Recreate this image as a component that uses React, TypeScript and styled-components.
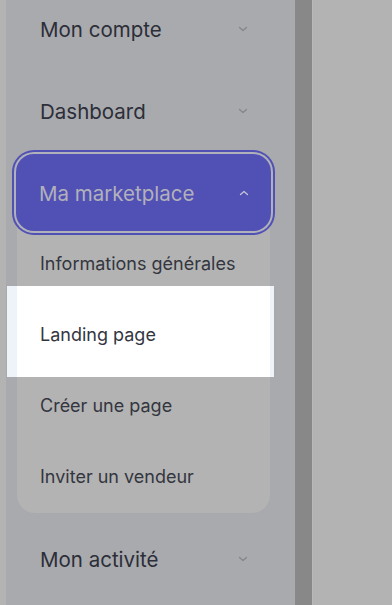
import React from 'react';
import styled, { createGlobalStyle } from 'styled-components';

const colors = {
  page: '#b3b3b3',
  sidebar: '#a9aaae',
  sidebarLit: '#eef2f9',
  card: '#b3b3b3',
  scrollbar: '#888888',
  purple: '#5150b4',
  ring: '#b1b1bb',
  text: '#2c2e38',
  subText: '#34363f',
  chevron: '#85868b',
  white: '#ffffff',
};

const GlobalStyle = createGlobalStyle`
  html, body {
    margin: 0;
    padding: 0;
    height: 100%;
    overflow: hidden;
    background: ${colors.page};
    font-family: Inter, "Noto Sans", sans-serif;
  }
  #root {
    height: 100%;
  }
`;

const Layout = styled.div({
  display: 'flex',
  height: '605px',
  overflow: 'hidden',
});

const Gutter = styled.div({
  width: '6px',
  flexShrink: 0,
});

const Sidebar = styled.nav({
  width: '289px',
  flexShrink: 0,
  backgroundColor: colors.sidebar,
  padding: '0 25px 0 11px',
  boxSizing: 'border-box',
});

// the list is scrolled a little, the first row is cut at the top
const MenuList = styled.div({
  display: 'flex',
  flexDirection: 'column',
  gap: '5px',
  marginTop: '-10px',
});

const Scrollbar = styled.div({
  width: '17px',
  flexShrink: 0,
  backgroundColor: colors.scrollbar,
});

const Content = styled.main({
  flex: 1,
  borderLeft: '1px solid #b9b9b9',
});

const MenuRow = styled.button({
  display: 'flex',
  alignItems: 'center',
  justifyContent: 'space-between',
  height: '77px',
  padding: '1px 22px 0 23px',
  border: 'none',
  background: 'transparent',
  fontFamily: 'Inter, "Noto Sans", sans-serif',
  fontSize: '20.5px',
  fontWeight: 400,
  color: colors.text,
  textAlign: 'left',
  cursor: 'pointer',
});

const ActiveRow = styled(MenuRow)({
  margin: '0 -1px -6px',
  borderRadius: '18px',
  backgroundColor: colors.purple,
  color: colors.ring,
  boxShadow: `0 0 0 2px ${colors.ring}, 0 0 0 4px ${colors.purple}`,
  position: 'relative',
  zIndex: 1,
});

const SubCard = styled.div({
  display: 'flex',
  flexDirection: 'column',
  backgroundColor: colors.card,
  borderRadius: '18px',
  paddingBottom: '4px',
  marginBottom: '2px',
});

const SubItem = styled.a<{ $spotlight?: boolean }>((props) => ({
  display: 'flex',
  alignItems: 'center',
  height: '71px',
  padding: '6px 0 0 23px',
  boxSizing: 'border-box',
  fontSize: '18px',
  fontWeight: 400,
  color: colors.subText,
  textDecoration: 'none',
  position: 'relative',
  ...(props.$spotlight
    ? {
        backgroundColor: colors.white,
        boxShadow: `0 -10px 0 0 ${colors.white}, 0 10px 0 0 ${colors.white}, -10px 0 0 0 ${colors.sidebarLit}, -10px -10px 0 0 ${colors.sidebarLit}, -10px 10px 0 0 ${colors.sidebarLit}, 4px 0 0 0 ${colors.sidebarLit}, 4px -10px 0 0 ${colors.sidebarLit}, 4px 10px 0 0 ${colors.sidebarLit}`,
        zIndex: 2,
      }
    : {}),
}));

function Chevron({ up, color }: { up?: boolean; color: string }) {
  return (
    <svg width="10" height="6" viewBox="0 0 10 6" fill="none">
      <path
        d={up ? 'M1.5 4.5 L5 1.5 L8.5 4.5' : 'M1.5 1.5 L5 4.5 L8.5 1.5'}
        stroke={color}
        strokeWidth="1.3"
        strokeLinecap="round"
        strokeLinejoin="round"
      />
    </svg>
  );
}

const subItems = ['Informations générales', 'Landing page', 'Créer une page', 'Inviter un vendeur'];

export default function App() {
  return (
    <>
      <GlobalStyle />
      <Layout>
        <Gutter />
        <Sidebar>
          <MenuList>
            <MenuRow>
              Mon compte
              <Chevron color={colors.chevron} />
            </MenuRow>
            <MenuRow>
              Dashboard
              <Chevron color={colors.chevron} />
            </MenuRow>
            <SubCard>
              <ActiveRow>
                Ma marketplace
                <Chevron up color="#c4c4d8" />
              </ActiveRow>
              {subItems.map((label) => (
                <SubItem key={label} href="#" $spotlight={label === 'Landing page'}>
                  {label}
                </SubItem>
              ))}
            </SubCard>
            <MenuRow>
              Mon activité
              <Chevron color={colors.chevron} />
            </MenuRow>
          </MenuList>
        </Sidebar>
        <Scrollbar />
        <Content />
      </Layout>
    </>
  );
}
